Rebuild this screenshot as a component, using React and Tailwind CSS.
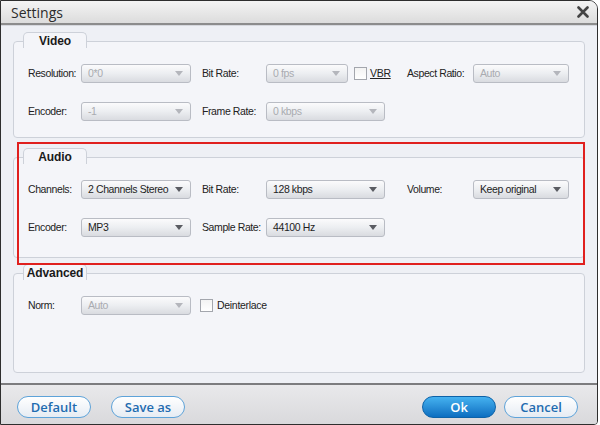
import React from "react";

const font = { fontFamily: '"Liberation Sans", Arial, sans-serif' };
const uiFont = { fontFamily: '"Open Sans", "Noto Sans", sans-serif' };

function Arrow({ disabled }) {
  return (
    <svg width="8" height="5" viewBox="0 0 8 5" className="shrink-0">
      <path d="M0 0 L8 0 L4 5 Z" fill={disabled ? "#b4b6bc" : "#5a5c62"} />
    </svg>
  );
}

function Select({ value, width, disabled }) {
  return (
    <div
      className={`h-[19px] ${width} flex items-center justify-between pl-[6px] pr-[7px] rounded-[3px] border border-[#b9bcc4] bg-gradient-to-b from-[#fbfbfc] via-[#eceef1] to-[#d9dbe0] text-[10.5px] tracking-[-0.4px] whitespace-nowrap ${
        disabled ? "text-[#a9abb0]" : "text-[#1e1e1e]"
      }`}
    >
      <span>{value}</span>
      <Arrow disabled={disabled} />
    </div>
  );
}

function Checkbox() {
  return <div className="w-[13px] h-[13px] border border-[#a3a6ad] bg-gradient-to-b from-[#f3f3f3] to-[#ffffff] shrink-0" />;
}

function Label({ children, width }) {
  return <div className={`${width} shrink-0 text-[10.5px] tracking-[-0.4px] whitespace-nowrap text-[#222]`}>{children}</div>;
}

function Section({ title, height, children, tabTop }) {
  return (
    <div className={tabTop}>
      <div className="relative z-10 ml-[10px] w-[64px] h-[16px] border border-b-0 border-[#cdd1d9] rounded-t-[5px] bg-[#f4f5f9] flex justify-center pt-[1px]">
        <span className="text-[12px] font-bold text-[#1a1a1a] leading-[14px] tracking-[-0.1px]">{title}</span>
      </div>
      <div className={`-mt-[7px] ${height} border border-[#cdd1d9] rounded-[4px] bg-[#f4f5f9] pl-[14px] pt-[22px] flex flex-col gap-[19px]`}>
        {children}
      </div>
    </div>
  );
}

function Row({ children }) {
  return <div className="flex items-center h-[19px]">{children}</div>;
}

function FooterButton({ label }) {
  return (
    <button
      className="w-[74px] h-[22px] rounded-full border border-[#5ea3d9] bg-gradient-to-b from-[#ffffff] to-[#e6ecf3] text-[#1f6cb0] text-[13px] font-semibold leading-none flex items-center justify-center"
      style={uiFont}
    >
      {label}
    </button>
  );
}

export default function App() {
  return (
    <div className="w-[600px] h-[425px] bg-white" style={font}>
      <div className="w-[598px] h-[425px] border border-[#2e2e2e] rounded-tr-[9px] rounded-br-[4px] overflow-hidden flex flex-col bg-[#eef0f5]">
        {/* title bar */}
        <div className="h-[22px] shrink-0 bg-gradient-to-b from-[#f4f4f4] to-[#dcdcdc] flex items-center justify-between pl-[10px] pr-[8px]">
          <span className="text-[14px] text-[#2b2b2b]" style={uiFont}>Settings</span>
          <svg width="12" height="12" viewBox="0 0 12 12">
            <path d="M1.5 1.5 L10.5 10.5 M10.5 1.5 L1.5 10.5" stroke="#444" strokeWidth="2.6" strokeLinecap="round" />
          </svg>
        </div>
        <div className="h-[2px] shrink-0 bg-[#8c8c8c]" />
        <div className="h-[1px] shrink-0 bg-[#d6d8de]" />

        {/* content */}
        <div className="relative flex-1 px-[12px] pt-[6px]">
          <Section title="Video" height="h-[97px]">
            <Row>
              <Label width="w-[53px]">Resolution:</Label>
              <div className="w-[121px] shrink-0"><Select value="0*0" width="w-[110px]" disabled /></div>
              <Label width="w-[64px]">Bit Rate:</Label>
              <div className="w-[141px] shrink-0 flex items-center">
                <Select value="0 fps" width="w-[82px]" disabled />
                <div className="ml-[6px]"><Checkbox /></div>
                <span className="ml-[3px] text-[10.5px] tracking-[-0.3px] text-[#222] underline">VBR</span>
              </div>
              <Label width="w-[66px]">Aspect Ratio:</Label>
              <Select value="Auto" width="w-[96px]" disabled />
            </Row>
            <Row>
              <Label width="w-[53px]">Encoder:</Label>
              <div className="w-[121px] shrink-0"><Select value="-1" width="w-[110px]" disabled /></div>
              <Label width="w-[64px]">Frame Rate:</Label>
              <Select value="0 kbps" width="w-[119px]" disabled />
            </Row>
          </Section>

          <Section title="Audio" height="h-[101px]" tabTop="mt-[10px]">
            <Row>
              <Label width="w-[53px]">Channels:</Label>
              <div className="w-[121px] shrink-0"><Select value="2 Channels Stereo" width="w-[110px]" /></div>
              <Label width="w-[64px]">Bit Rate:</Label>
              <div className="w-[141px] shrink-0"><Select value="128 kbps" width="w-[119px]" /></div>
              <Label width="w-[66px]">Volume:</Label>
              <Select value="Keep original" width="w-[96px]" />
            </Row>
            <Row>
              <Label width="w-[53px]">Encoder:</Label>
              <div className="w-[121px] shrink-0"><Select value="MP3" width="w-[110px]" /></div>
              <Label width="w-[64px]">Sample Rate:</Label>
              <Select value="44100 Hz" width="w-[119px]" />
            </Row>
          </Section>

          <Section title="Advanced" height="h-[100px]" tabTop="mt-[6px]">
            <Row>
              <Label width="w-[53px]">Norm:</Label>
              <div className="w-[119px] shrink-0"><Select value="Auto" width="w-[110px]" disabled /></div>
              <Checkbox />
              <span className="ml-[4px] text-[10.5px] tracking-[-0.3px] text-[#222]">Deinterlace</span>
            </Row>
          </Section>

          {/* red highlight annotation */}
          <div className="absolute left-[16px] top-[116px] w-[568px] h-[123px] border-2 border-[#e0201e] pointer-events-none z-20" />
        </div>

        {/* footer */}
        <div className="h-[2px] shrink-0 bg-[#7c7c7e]" />
        <div className="h-[39px] shrink-0 bg-gradient-to-b from-[#e9e9eb] to-[#d9d9dc] flex items-start pt-[11px] pl-[16px] pr-[19px]">
          <FooterButton label="Default" />
          <div className="ml-[20px] flex"><FooterButton label="Save as" /></div>
          <div className="flex-1" />
          <button
            className="w-[74px] h-[22px] rounded-full border border-[#0d62a8] bg-gradient-to-b from-[#45b2f0] to-[#0b6ec0] text-white text-[13px] font-semibold leading-none flex items-center justify-center"
            style={uiFont}
          >
            Ok
          </button>
          <div className="ml-[8px] flex"><FooterButton label="Cancel" /></div>
        </div>
      </div>
    </div>
  );
}
